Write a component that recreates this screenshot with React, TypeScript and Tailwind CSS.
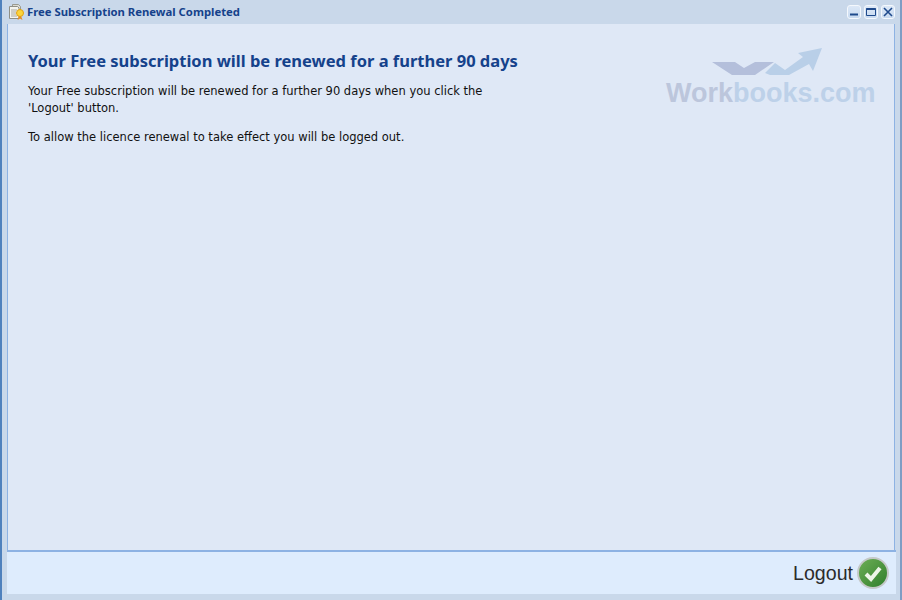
const font = { fontFamily: '"DejaVu Sans", sans-serif' };

function CertificateIcon() {
  return (
    <svg width="17" height="18" viewBox="0 0 17 18" className="shrink-0">
      <path d="M4.500 1.500h6l2 2v9h-8z" fill="#dcdcd4" stroke="#9a9a90" />
      <path d="M1.500 3.500h8l1.500 1.500v10.500h-9.500z" fill="#f4f4ee" stroke="#8f8f86" />
      <path d="M3 7h6M3 9h5M3 11h5M3 13h6" stroke="#a8a8a0" />
      <path d="M11 13l-1.500 4 2.500-1.500 2.500 1.500-1.500-4z" fill="#e88a1c" />
      <circle cx="12" cy="10" r="3.500" fill="#fcd43a" stroke="#e0a010" />
    </svg>
  );
}

function WindowButton({ children }: { children: React.ReactNode }) {
  return (
    <button className="flex h-[14px] w-[14px] items-center justify-center rounded-[3px] border border-[#f4f8fd] bg-gradient-to-b from-[#dce8f7] to-[#c8daf0]">
      {children}
    </button>
  );
}

function WorkbooksLogo() {
  return (
    <div className="flex w-[208px] flex-col items-start">
      <svg width="120" height="32" viewBox="0 0 120 32" className="ml-[39px] mb-[2px]">
        <path d="M7 17h23l9 6 11-6h19l-19 13h-23z" fill="#b4bfdb" />
        <path d="M60 28l10-10 10 7 18-13-5-4 24-5-9 23-4-7-20 11h-19z" fill="#b9cfe8" />
      </svg>
      <div className="text-[27px] leading-[28px] font-bold whitespace-nowrap" style={{ fontFamily: '"Liberation Sans", sans-serif' }}>
        <span className="text-[#bcc6dc]">Work</span>
        <span className="text-[#bdd1e9]">books.com</span>
      </div>
    </div>
  );
}

export default function App() {
  return (
    <div className="flex h-[600px] w-[902px] flex-col overflow-hidden border-x-2 border-l-[#4f81bd] border-r-[#7f9dc4] bg-[#c9d8ea]" style={font}>
      <div className="flex h-[24px] items-center pl-[6px] pr-[5px]">
        <CertificateIcon />
        <span className="ml-[2px] text-[11.3px] font-bold text-[#15428b]" style={{ fontFamily: '"Noto Sans", sans-serif' }}>Free Subscription Renewal Completed</span>
        <div className="ml-auto flex gap-[3px]">
          <WindowButton>
            <svg width="10" height="10" viewBox="0 0 10 10">
              <path d="M1 7.500h8" stroke="#1f4a8c" strokeWidth="2" />
            </svg>
          </WindowButton>
          <WindowButton>
            <svg width="10" height="10" viewBox="0 0 10 10">
              <path d="M0.500 1.500h9v7h-9z" fill="none" stroke="#1f4a8c" />
              <path d="M0.500 2h9" stroke="#1f4a8c" strokeWidth="2" />
            </svg>
          </WindowButton>
          <WindowButton>
            <svg width="10" height="10" viewBox="0 0 10 10">
              <path d="M1 1l8 8M9 1l-8 8" stroke="#1f4a8c" strokeWidth="1.600" />
            </svg>
          </WindowButton>
        </div>
      </div>
      <div className="ml-[5px] mr-[5px] flex h-[526px] justify-between border-x border-[#8db2e3] bg-[#dfe8f6] pl-[20px] pr-[20px]">
        <div className="w-[480px] text-[11.5px] leading-[17px] text-[#111]">
          <h1 className="mt-[27px] mb-[12px] text-[16.5px] leading-[20px] font-bold whitespace-nowrap text-[#15428b]" style={{ fontFamily: '"Noto Sans", sans-serif' }}>
            Your Free subscription will be renewed for a further 90 days
          </h1>
          <p className="mb-[12px]">
            Your Free subscription will be renewed for a further 90 days when you click the 'Logout' button.
          </p>
          <p>To allow the licence renewal to take effect you will be logged out.</p>
        </div>
        <div className="mt-[21px]">
          <WorkbooksLogo />
        </div>
      </div>
      <div className="ml-[5px] mr-[4px] flex h-[44px] items-center justify-end gap-[4px] border-t-2 border-[#8db2e3] bg-[#deecfd] pr-[7px]">
        <span className="mt-[2px] text-[19.6px] text-[#2b2b2b]" style={{ fontFamily: '"Liberation Sans", sans-serif' }}>Logout</span>
        <div className="flex h-[32px] w-[32px] items-center justify-center rounded-full border-2 border-[#c4c8c8] bg-gradient-to-br from-[#6cae55] to-[#2f7f2c]">
          <svg width="22" height="22" viewBox="0 0 22 22">
            <path d="M4 12l5 5 9-11" fill="none" stroke="#eef5e8" strokeWidth="4" />
          </svg>
        </div>
      </div>
    </div>
  );
}
